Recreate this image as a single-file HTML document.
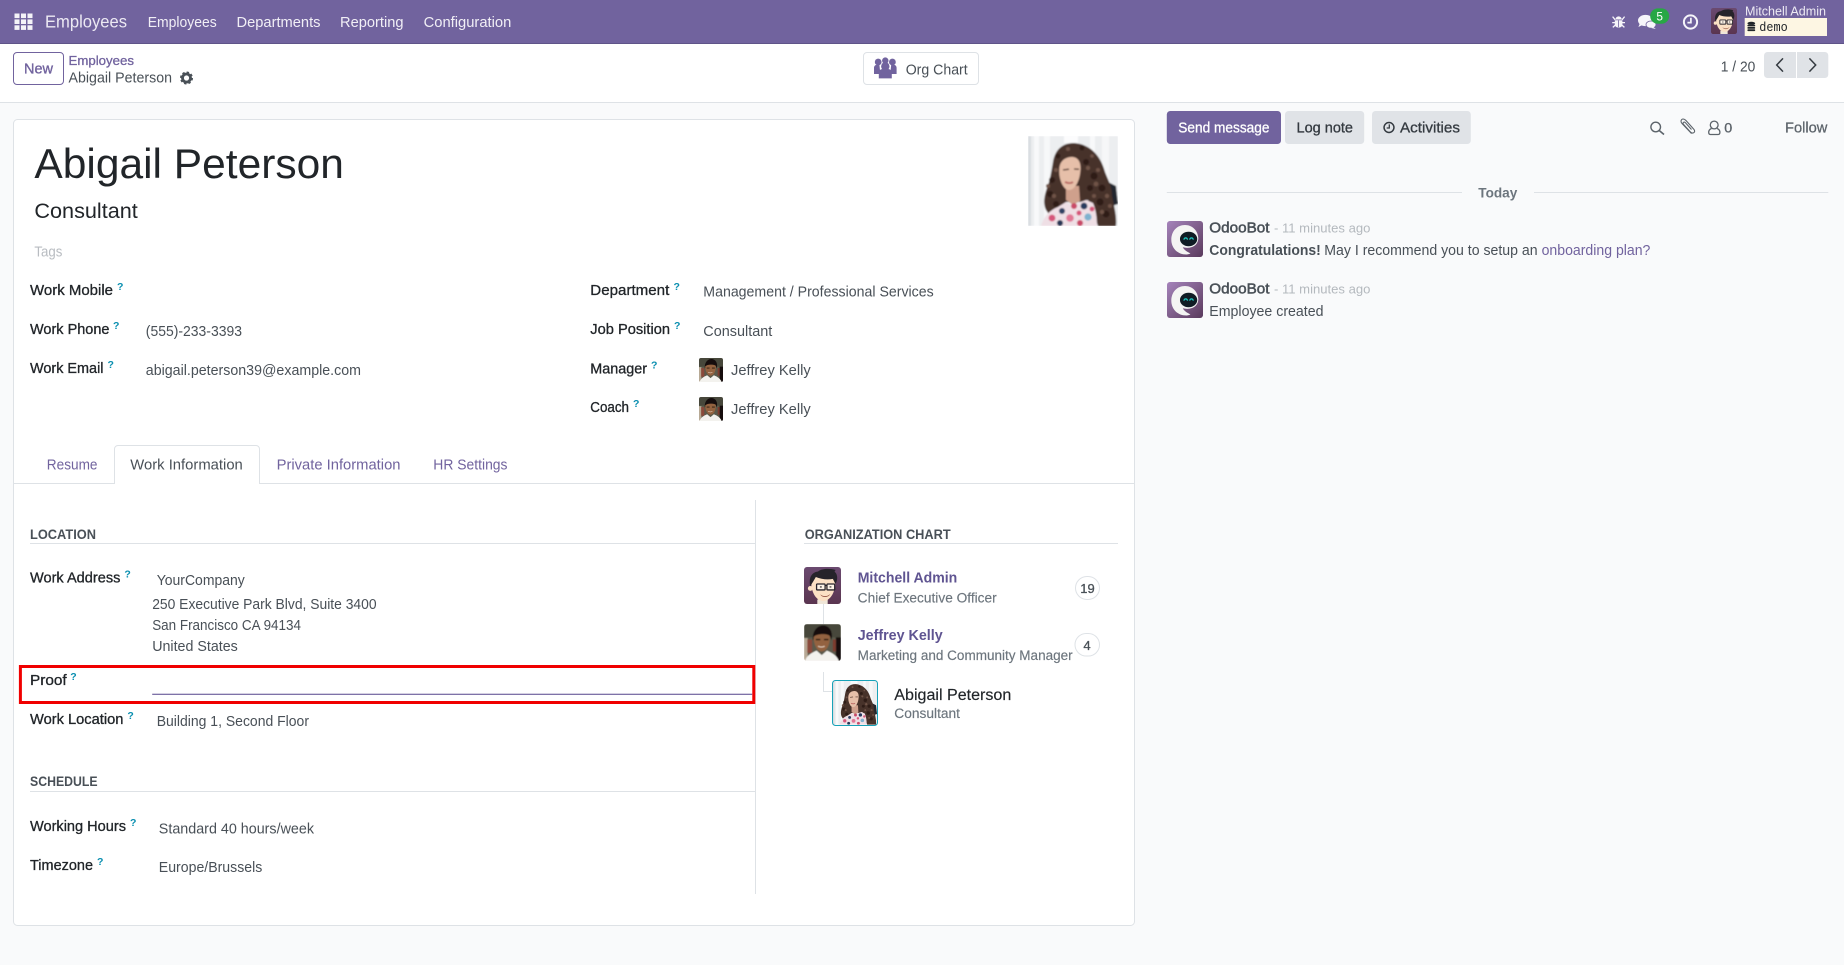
<!DOCTYPE html>
<html lang="en">
<head>
<meta charset="utf-8">
<title>Abigail Peterson - Employees</title>
<style>
html,body{margin:0;padding:0;width:1844px;height:965px;overflow:hidden;background:#f9fafb}
svg{display:block}
text{font-family:"Liberation Sans",sans-serif;white-space:pre}
.nav{font-size:15px;fill:#f1eff6}
.lb{font-size:14.5px;fill:#212529;stroke:#212529;stroke-width:.3}
.v{font-size:14.5px;fill:#495057}
.h{font-size:10.5px;fill:#0a8fb0;font-weight:bold}
.sec{font-size:13.5px;fill:#495057;font-weight:bold}
.tab{font-size:14.5px;fill:#71639e}
.ch{font-size:14.5px;fill:#495057}
.m{font-size:14.5px;fill:#495057;stroke:#495057;stroke-width:.5}
.t{font-size:13px;fill:#b4b9be}
.sub{font-size:13.5px;fill:#6c757d;stroke:#6c757d;stroke-width:.15}
.oc{font-size:14.5px;fill:#5f5491;font-weight:bold}
</style>
</head>
<body>
<svg xmlns="http://www.w3.org/2000/svg" width="1844" height="965" viewBox="0 0 1844 965">
<defs>
<filter id="b1" x="-5%" y="-5%" width="110%" height="110%"><feGaussianBlur stdDeviation="0.8"/></filter>
<filter id="b2" x="-5%" y="-5%" width="110%" height="110%"><feGaussianBlur stdDeviation="1.6"/></filter>
<clipPath id="c90"><rect width="90" height="90"/></clipPath>
<clipPath id="c100r"><rect width="100" height="100" rx="8"/></clipPath>
<linearGradient id="gm" x1="0" y1="0" x2="0" y2="1"><stop offset="0" stop-color="#6b4a70"/><stop offset="1" stop-color="#5a3550"/></linearGradient>
<linearGradient id="gb" x1="0" y1="0" x2="1" y2="1"><stop offset="0" stop-color="#a583bb"/><stop offset="1" stop-color="#5a3a5c"/></linearGradient>

<symbol id="abi" viewBox="0 0 90 90">
<g clip-path="url(#c90)"><g filter="url(#b1)">
<rect width="90" height="90" fill="#eceef0"/>
<rect x="0" width="3" height="90" fill="#d9dde1"/>
<rect x="6" width="5" height="90" fill="#f8f9fa"/>
<rect x="16" width="6" height="90" fill="#f7f8f9"/>
<rect x="36" width="14" height="7" fill="#fcfcfd"/>
<rect x="62" width="5" height="40" fill="#f8f9fa"/>
<rect x="74" width="7" height="90" fill="#f6f7f8"/>
<path d="M80 46l8 4 2 18-6 2z" fill="#23262f"/>
<path d="M46 7C34 7 27 14 25 26 23 38 22 44 19 52 16 60 15 68 18 74 22 80 25 84 30 78L38 66 52 66 60 64 70 90 88 90C89 80 86 70 84 60 84 50 80 44 77 36 73 20 62 8 46 7Z" fill="#46302a"/>
<g fill="#2f1e18">
<circle cx="24" cy="44" r="3"/><circle cx="22" cy="58" r="3.2"/><circle cx="28" cy="68" r="3"/><circle cx="58" cy="26" r="3"/><circle cx="66" cy="40" r="3.6"/><circle cx="62" cy="52" r="3"/><circle cx="74" cy="52" r="3.4"/><circle cx="72" cy="66" r="3.6"/><circle cx="78" cy="78" r="3.4"/><circle cx="30" cy="20" r="2.4"/><circle cx="54" cy="12" r="2.4"/>
</g>
<g fill="#6f5346">
<circle cx="20" cy="50" r="2"/><circle cx="26" cy="60" r="2.2"/><circle cx="28" cy="34" r="2"/><circle cx="60" cy="32" r="2.2"/><circle cx="70" cy="34" r="2"/><circle cx="68" cy="48" r="2.4"/><circle cx="79" cy="60" r="2.2"/><circle cx="66" cy="60" r="2"/><circle cx="74" cy="76" r="2.2"/><circle cx="40" cy="13" r="2"/><circle cx="64" cy="20" r="1.8"/><circle cx="82" cy="70" r="2"/>
</g>
<path d="M38 50l13 0 1 15-7 4-7-5z" fill="#cfa08c"/>
<path d="M31.500 31C32.500 25 37 21 44 21 49 21 53 25 52.500 33 52 45 47 54 41 54 35 54 30 42 31.500 31Z" fill="#e6bfa9"/>
<path d="M35 34l6-.8M46 33l5 .2" stroke="#4a2f26" stroke-width="1.300"/>
<path d="M37 46c3 1.400 6 1.400 8 0" stroke="#b8635f" stroke-width="1.800" fill="none"/>
<path d="M13 90C16 80 22 74 30 71L38 66 44 70 58 64 65 67C68 74 69 82 69 90Z" fill="#efdfe5"/>
<circle cx="24" cy="82" r="3.400" fill="#d6557a"/><circle cx="34" cy="75" r="3" fill="#2f3f63"/><circle cx="46" cy="70" r="3" fill="#c94a68"/>
<circle cx="56" cy="70" r="3.400" fill="#283a5e"/><circle cx="42" cy="82" r="3.800" fill="#e17795"/><circle cx="60" cy="81" r="3.600" fill="#7fb2cf"/>
<circle cx="32" cy="87" r="3" fill="#263555"/><circle cx="51" cy="77" r="2.500" fill="#d6557a"/><circle cx="52" cy="87" r="3" fill="#c94a68"/><circle cx="64" cy="73" r="2.400" fill="#d6557a"/>
</g></g>
</symbol>

<symbol id="jef" viewBox="0 0 100 100">
<g clip-path="url(#c100r)"><g filter="url(#b2)">
<rect width="100" height="100" fill="#5b5a4b"/>
<rect x="0" y="0" width="100" height="36" fill="#46473b"/>
<rect x="0" y="38" width="10" height="62" fill="#b7a995"/>
<rect x="9" y="42" width="13" height="36" fill="#8a4a3a"/>
<rect x="86" y="36" width="14" height="64" fill="#181110"/>
<rect x="78" y="42" width="8" height="32" fill="#7e3a2d"/>
<path d="M24 44C22 16 38 4 52 4 68 4 80 20 74 44L70 32 32 32Z" fill="#130f0d"/>
<path d="M26 36C28 26 68 24 70 34 70 56 62 74 47 74 35 74 26 54 26 36Z" fill="#93623f"/>
<path d="M32 42h12M54 42h12" stroke="#2a1a10" stroke-width="3.500"/>
<path d="M38 60c6 3 12 3 18 0" stroke="#ecd9c8" stroke-width="2.500" fill="none"/>
<path d="M3 100C6 86 20 78 34 72L48 84 62 72C76 78 90 86 94 100Z" fill="#f3f2ee"/>
</g></g>
</symbol>

<symbol id="mit" viewBox="0 0 100 100">
<g clip-path="url(#c100r)">
<rect width="100" height="100" fill="url(#gm)"/>
<path d="M36 88h28v12H36z" fill="#efe6d8"/>
<path d="M20 38C18 66 32 92 52 92 70 92 84 70 85 42L78 24H28Z" fill="#fbe0c4"/>
<circle cx="17" cy="58" r="6.500" fill="#fbe0c4"/>
<path d="M17 52C12 30 20 14 38 12 50 3 70 4 86 8 82 11 82 13 86 16 92 26 90 38 85 46L78 32C64 35 46 33 32 27 28 34 23 42 17 52Z" fill="#26232a"/>
<rect x="34" y="46" width="23" height="16" rx="2" fill="#fdf3e6" stroke="#26232a" stroke-width="3.500"/>
<rect x="62" y="46" width="21" height="16" rx="2" fill="#fdf3e6" stroke="#26232a" stroke-width="3.500"/>
<path d="M57 50h5" stroke="#26232a" stroke-width="3"/>
<path d="M43 54h5M69 54h5" stroke="#26232a" stroke-width="3"/>
<path d="M44 74c8 7 20 6 27-1-4 10-22 11-27 1z" fill="#8e4a3a"/>
</g>
</symbol>

<symbol id="bot" viewBox="0 0 100 100">
<g clip-path="url(#c100r)">
<rect width="100" height="100" fill="url(#gb)"/>
<path d="M50 11C28 11 12 28 12 52 12 74 28 93 54 93 58 93 62 92 65 90 52 84 46 78 44 73 62 78 86 72 87 48 86 26 70 11 50 11Z" fill="#f4f4f3"/>
<ellipse cx="60" cy="50" rx="24" ry="20" fill="#101c24"/>
<path d="M47 52c1-7 9-7 10 0M63 52c1-7 9-7 10 0" stroke="#1fc7c0" stroke-width="3.400" fill="none"/>
</g>
</symbol>

<symbol id="clock" viewBox="0 0 16 16">
<circle cx="8" cy="8" r="6.600" fill="none" stroke="currentColor" stroke-width="2"/>
<path d="M8.400 3.800V8.600H4.900" fill="none" stroke="currentColor" stroke-width="1.700"/>
</symbol>
</defs>

<!-- page bg -->
<rect width="1844" height="965" fill="#f9fafb"/>

<!-- navbar -->
<rect width="1844" height="44" fill="#71639e"/>
<rect y="43" width="1844" height="1" fill="#5f5488"/>
<g fill="#f4f3f8">
<rect x="14.500" y="13.500" width="5" height="4.600"/><rect x="21" y="13.500" width="5" height="4.600"/><rect x="27.500" y="13.500" width="5" height="4.600"/>
<rect x="14.500" y="19.400" width="5" height="4.600"/><rect x="21" y="19.400" width="5" height="4.600"/><rect x="27.500" y="19.400" width="5" height="4.600"/>
<rect x="14.500" y="25.300" width="5" height="4.600"/><rect x="21" y="25.300" width="5" height="4.600"/><rect x="27.500" y="25.300" width="5" height="4.600"/>
</g>
<text x="45" y="27.500" font-size="17.500" fill="#ece9f3" textLength="82" lengthAdjust="spacingAndGlyphs">Employees</text>
<text class="nav" x="147.700" y="27" textLength="69" lengthAdjust="spacingAndGlyphs">Employees</text>
<text class="nav" x="236.500" y="27" textLength="84" lengthAdjust="spacingAndGlyphs">Departments</text>
<text class="nav" x="340" y="27" textLength="63.500" lengthAdjust="spacingAndGlyphs">Reporting</text>
<text class="nav" x="423.600" y="27" textLength="87.700" lengthAdjust="spacingAndGlyphs">Configuration</text>

<!-- systray -->
<g fill="#f6f5fa" stroke="none">
<path d="M1615.500 19.500a3 3 0 0 1 6.200 0z"/>
<path d="M1614.800 20.300h7.600v4c0 2.300-1.600 3.300-3.800 3.300s-3.800-1-3.800-3.300z"/>
</g>
<path d="M1612.600 16.600l2.600 3.200M1624.600 16.600l-2.600 3.200M1612.200 22.600h3M1625 22.600h-3M1612.800 27.400l2.600-2.400M1624.400 27.400l-2.600-2.400" stroke="#f6f5fa" stroke-width="1.300" fill="none"/>
<path d="M1618.600 20.300v7" stroke="#71639e" stroke-width=".8"/>
<ellipse cx="1645.500" cy="20.500" rx="7.500" ry="5.600" fill="#f6f5fa"/>
<path d="M1640 23l-1.600 4 5-2.500z" fill="#f6f5fa"/>
<ellipse cx="1651" cy="24.600" rx="5" ry="3.600" fill="#f6f5fa" stroke="#71639e" stroke-width=".8"/>
<path d="M1653.400 27l2.400 2-4.600-1z" fill="#f6f5fa"/>
<rect x="1650.200" y="8.400" width="19" height="15.400" rx="7.700" fill="#28a745"/>
<text x="1656.400" y="20.600" font-size="11.500" fill="#fff" textLength="6.600" lengthAdjust="spacingAndGlyphs">5</text>
<use href="#clock" x="1682.500" y="14" width="16" height="16" style="color:#f6f5fa"/>
<use href="#mit" x="1711" y="8" width="26" height="26"/>
<text x="1745" y="15.700" font-size="13" fill="#ece9f3" textLength="81" lengthAdjust="spacingAndGlyphs">Mitchell Admin</text>
<rect x="1744.700" y="18" width="82.300" height="18" fill="#fdf6e3"/>
<g fill="#212529"><ellipse cx="1751.300" cy="23.300" rx="3.900" ry="1.500"/><rect x="1747.400" y="24.600" width="7.800" height="1.800" rx=".8"/><rect x="1747.400" y="27" width="7.800" height="1.800" rx=".8"/><rect x="1747.400" y="29.300" width="7.800" height="1.800" rx=".8"/></g>
<text x="1759.300" y="31" font-size="12.500" fill="#212529" style="font-family:'Liberation Mono',monospace" textLength="28.400" lengthAdjust="spacingAndGlyphs">demo</text>

<!-- control panel -->
<rect y="44" width="1844" height="58" fill="#fff"/>
<rect y="102" width="1844" height="1" fill="#dee2e6"/>
<rect x="13.500" y="52.500" width="50" height="32" rx="3.500" fill="#fff" stroke="#71639e"/>
<text x="24" y="73.600" font-size="14.500" fill="#71639e" stroke="#71639e" stroke-width=".35" textLength="29" lengthAdjust="spacingAndGlyphs">New</text>
<text x="68.500" y="65" font-size="13" fill="#71639e" stroke="#71639e" stroke-width=".3" textLength="65.500" lengthAdjust="spacingAndGlyphs">Employees</text>
<text x="68.500" y="82.700" font-size="14.500" fill="#495057" textLength="103.500" lengthAdjust="spacingAndGlyphs">Abigail Peterson</text>
<circle cx="186.500" cy="78" r="4" fill="none" stroke="#495057" stroke-width="2.800"/>
<circle cx="186.500" cy="78" r="5.700" fill="none" stroke="#495057" stroke-width="1.600" stroke-dasharray="2.400 2.070"/>

<rect x="863.500" y="52.500" width="115" height="32" rx="3.500" fill="#fff" stroke="#dee2e6"/>
<g fill="#71639e">
<circle cx="878.200" cy="62" r="3.400"/><circle cx="892.400" cy="62" r="3.400"/><circle cx="885.300" cy="60.600" r="3.200"/>
<path d="M874 74v-6c0-2 1.400-3.200 3-3.200h2.400l1 9.200zM896.600 74v-6c0-2-1.400-3.200-3-3.200h-2.400l-1 9.200z"/>
<circle cx="885.300" cy="66.400" r="4.200"/>
<path d="M878.800 78.400v-5.400c0-2.600 1.800-4 4-4h5c2.200 0 4 1.400 4 4v5.400z"/>
</g>
<text x="905.700" y="74.300" font-size="14.500" fill="#495057" textLength="62" lengthAdjust="spacingAndGlyphs">Org Chart</text>

<text x="1720.800" y="71.700" font-size="14.500" fill="#495057" textLength="34.500" lengthAdjust="spacingAndGlyphs">1 / 20</text>
<path d="M1767.500 52h28.500v26h-28.500a3.500 3.500 0 0 1-3.500-3.500v-19a3.500 3.500 0 0 1 3.500-3.500z" fill="#e0e3e7"/>
<path d="M1797 52h27.800a3.500 3.500 0 0 1 3.500 3.500v19a3.500 3.500 0 0 1-3.500 3.500h-27.800z" fill="#e0e3e7"/>
<path d="M1783 58.400l-6.300 6.600 6.300 6.600M1809.400 58.400l6.300 6.600-6.300 6.600" fill="none" stroke="#343a40" stroke-width="1.500"/>

<!-- sheet -->
<rect x="13.500" y="119.500" width="1121" height="806" rx="4" fill="#fff" stroke="#dee2e6"/>

<text x="34.400" y="178" font-size="42" fill="#212529" textLength="309.500" lengthAdjust="spacingAndGlyphs">Abigail Peterson</text>
<text x="34.400" y="218" font-size="21" fill="#212529" textLength="103.400" lengthAdjust="spacingAndGlyphs">Consultant</text>
<text x="34.400" y="256.700" font-size="14.500" fill="#b8bcc1" textLength="28" lengthAdjust="spacingAndGlyphs">Tags</text>
<use href="#abi" x="1028" y="136" width="90" height="90"/>

<!-- left fields -->
<text class="lb" x="30" y="295" textLength="83" lengthAdjust="spacingAndGlyphs">Work Mobile</text><text class="h" x="117" y="290">?</text>
<text class="lb" x="30" y="334" textLength="79.500" lengthAdjust="spacingAndGlyphs">Work Phone</text><text class="h" x="113" y="329">?</text>
<text class="v" x="145.800" y="336" textLength="96.200" lengthAdjust="spacingAndGlyphs">(555)-233-3393</text>
<text class="lb" x="30" y="373" textLength="73.500" lengthAdjust="spacingAndGlyphs">Work Email</text><text class="h" x="107.500" y="368">?</text>
<text class="v" x="145.800" y="375" textLength="215.200" lengthAdjust="spacingAndGlyphs">abigail.peterson39@example.com</text>

<!-- right fields -->
<text class="lb" x="590.300" y="295" textLength="79" lengthAdjust="spacingAndGlyphs">Department</text><text class="h" x="673.500" y="290">?</text>
<text class="v" x="703.300" y="296.700" textLength="230.400" lengthAdjust="spacingAndGlyphs">Management / Professional Services</text>
<text class="lb" x="590.300" y="334" textLength="79.700" lengthAdjust="spacingAndGlyphs">Job Position</text><text class="h" x="674" y="329">?</text>
<text class="v" x="703.300" y="336" textLength="69" lengthAdjust="spacingAndGlyphs">Consultant</text>
<text class="lb" x="590.300" y="373.300" textLength="56.700" lengthAdjust="spacingAndGlyphs">Manager</text><text class="h" x="651" y="368.300">?</text>
<use href="#jef" x="699" y="358" width="24" height="24"/>
<text class="v" x="731" y="375" textLength="79.700" lengthAdjust="spacingAndGlyphs">Jeffrey Kelly</text>
<text class="lb" x="590.300" y="412" textLength="38.700" lengthAdjust="spacingAndGlyphs">Coach</text><text class="h" x="633" y="407">?</text>
<use href="#jef" x="699" y="397" width="24" height="24"/>
<text class="v" x="731" y="414" textLength="79.700" lengthAdjust="spacingAndGlyphs">Jeffrey Kelly</text>

<!-- tabs -->
<rect x="14" y="483" width="1120" height="1" fill="#dee2e6"/>
<path d="M114.500 484V449a3.500 3.500 0 0 1 3.500-3.500h138a3.500 3.500 0 0 1 3.500 3.500v35" fill="#fff" stroke="#dee2e6"/>
<rect x="115" y="482" width="144" height="3" fill="#fff"/>
<text class="tab" x="46.800" y="469.300" textLength="50.700" lengthAdjust="spacingAndGlyphs">Resume</text>
<text class="tab" x="130.300" y="469.300" style="fill:#495057" textLength="112.500" lengthAdjust="spacingAndGlyphs">Work Information</text>
<text class="tab" x="276.600" y="469.300" textLength="123.900" lengthAdjust="spacingAndGlyphs">Private Information</text>
<text class="tab" x="433.300" y="469.300" textLength="74.200" lengthAdjust="spacingAndGlyphs">HR Settings</text>

<rect x="755" y="500" width="1" height="394" fill="#dee2e6"/>

<!-- location -->
<text class="sec" x="30" y="539" textLength="66" lengthAdjust="spacingAndGlyphs">LOCATION</text>
<rect x="30" y="543" width="725" height="1" fill="#dee2e6"/>
<text class="lb" x="30" y="582.700" textLength="90.400" lengthAdjust="spacingAndGlyphs">Work Address</text><text class="h" x="124.400" y="577.500">?</text>
<text class="v" x="156.700" y="585" textLength="88.100" lengthAdjust="spacingAndGlyphs">YourCompany</text>
<text class="v" x="152.200" y="609" textLength="224.400" lengthAdjust="spacingAndGlyphs">250 Executive Park Blvd, Suite 3400</text>
<text class="v" x="152.200" y="630" textLength="148.800" lengthAdjust="spacingAndGlyphs">San Francisco CA 94134</text>
<text class="v" x="152.200" y="651" textLength="85.600" lengthAdjust="spacingAndGlyphs">United States</text>

<text class="lb" x="30" y="685" textLength="36.700" lengthAdjust="spacingAndGlyphs">Proof</text><text class="h" x="70.300" y="680">?</text>
<rect x="152.200" y="693.700" width="600" height="1.200" fill="#71639e"/>
<rect x="20.400" y="666.500" width="733.400" height="36" fill="none" stroke="#f00000" stroke-width="3"/>

<text class="lb" x="30" y="724" textLength="93.400" lengthAdjust="spacingAndGlyphs">Work Location</text><text class="h" x="127.400" y="719">?</text>
<text class="v" x="156.700" y="726" textLength="152.300" lengthAdjust="spacingAndGlyphs">Building 1, Second Floor</text>

<!-- schedule -->
<text class="sec" x="30" y="786" textLength="67.600" lengthAdjust="spacingAndGlyphs">SCHEDULE</text>
<rect x="30" y="791" width="725" height="1" fill="#dee2e6"/>
<text class="lb" x="30" y="831" textLength="96" lengthAdjust="spacingAndGlyphs">Working Hours</text><text class="h" x="130" y="826">?</text>
<text class="v" x="158.800" y="833.500" textLength="155.200" lengthAdjust="spacingAndGlyphs">Standard 40 hours/week</text>
<text class="lb" x="30" y="870" textLength="63" lengthAdjust="spacingAndGlyphs">Timezone</text><text class="h" x="97" y="865">?</text>
<text class="v" x="158.800" y="872" textLength="103.500" lengthAdjust="spacingAndGlyphs">Europe/Brussels</text>

<!-- org chart -->
<text class="sec" x="804.700" y="539" textLength="146" lengthAdjust="spacingAndGlyphs">ORGANIZATION CHART</text>
<rect x="804" y="543" width="314" height="1" fill="#dee2e6"/>
<use href="#mit" x="804" y="567" width="37" height="37"/>
<rect x="823" y="604" width="1" height="20" fill="#dee2e6"/>
<text class="oc" x="857.700" y="582.700" textLength="99.600" lengthAdjust="spacingAndGlyphs">Mitchell Admin</text>
<text class="sub" x="857.700" y="602.700" textLength="139" lengthAdjust="spacingAndGlyphs">Chief Executive Officer</text>
<rect x="1075.500" y="576.500" width="24" height="23" rx="11.500" fill="#fff" stroke="#dee2e6"/>
<text x="1080.300" y="593" font-size="13" fill="#495057" stroke="#495057" stroke-width=".3" textLength="14.400" lengthAdjust="spacingAndGlyphs">19</text>
<use href="#jef" x="804" y="624" width="37" height="37"/>
<text class="oc" x="857.700" y="640" textLength="85" lengthAdjust="spacingAndGlyphs">Jeffrey Kelly</text>
<text class="sub" x="857.700" y="660" textLength="215" lengthAdjust="spacingAndGlyphs">Marketing and Community Manager</text>
<rect x="1075" y="633.500" width="24.500" height="22.500" rx="11.200" fill="#fff" stroke="#dee2e6"/>
<text x="1083.400" y="650" font-size="13" fill="#495057" stroke="#495057" stroke-width=".3" textLength="7.300" lengthAdjust="spacingAndGlyphs">4</text>
<path d="M823.500 672V691.500H832.500" fill="none" stroke="#dee2e6"/>
<use href="#abi" x="833" y="680.500" width="44" height="44.500"/>
<rect x="832.500" y="680.500" width="45" height="45" rx="3" fill="none" stroke="#17a2b8"/>
<text x="894.300" y="700" font-size="15.500" fill="#212529" stroke="#212529" stroke-width=".15" textLength="117" lengthAdjust="spacingAndGlyphs">Abigail Peterson</text>
<text class="sub" x="894.300" y="718" textLength="65.700" lengthAdjust="spacingAndGlyphs">Consultant</text>

<!-- chatter -->
<rect x="1166.800" y="111" width="114.200" height="33" rx="3.500" fill="#71639e"/>
<text x="1178.300" y="132.700" font-size="14.500" fill="#fff" stroke="#fff" stroke-width=".3" textLength="91.200" lengthAdjust="spacingAndGlyphs">Send message</text>
<rect x="1285" y="111" width="79.200" height="33" rx="3.500" fill="#e0e3e7"/>
<text x="1296.500" y="132.700" font-size="14.500" fill="#343a40" stroke="#343a40" stroke-width=".3" textLength="56.500" lengthAdjust="spacingAndGlyphs">Log note</text>
<rect x="1372" y="111" width="98.800" height="33" rx="3.500" fill="#e0e3e7"/>
<use href="#clock" x="1383" y="121.500" width="12" height="12" style="color:#343a40"/>
<text x="1400" y="132.700" font-size="14.500" fill="#343a40" stroke="#343a40" stroke-width=".3" textLength="60" lengthAdjust="spacingAndGlyphs">Activities</text>

<circle cx="1655.700" cy="127" r="4.800" fill="none" stroke="#5c636a" stroke-width="1.400"/>
<path d="M1659.200 130.500l4.800 4" stroke="#5c636a" stroke-width="1.600"/>
<path d="M1691.500 133.500l-9.500-10c-2-2.200-.5-4.500 1-4.500 1.300 0 2.300.8 3.300 1.900l7.500 8.300c1.300 1.500 1 3-.2 3.600-1.100.6-2.300.2-3.300-.9l-6.800-7.500c-.7-.8-.6-1.700 0-2.100.7-.5 1.400-.2 2 .5l6 6.700" fill="none" stroke="#5c636a" stroke-width="1.100"/>
<circle cx="1714.200" cy="125" r="3.900" fill="none" stroke="#5c636a" stroke-width="1.300"/>
<path d="M1711.500 128.500c-2 .8-2.800 2.200-2.800 3.800 0 1.300.5 2.200 1.600 2.200h7.900c1.100 0 1.700-.9 1.700-2.200 0-1.600-.8-3-2.800-3.800" fill="none" stroke="#5c636a" stroke-width="1.300"/>
<text x="1724.300" y="132.700" font-size="14" fill="#5c636a" stroke="#5c636a" stroke-width=".3" textLength="8" lengthAdjust="spacingAndGlyphs">0</text>
<text x="1785" y="132.700" font-size="14.500" fill="#5c636a" stroke="#5c636a" stroke-width=".25" textLength="42.400" lengthAdjust="spacingAndGlyphs">Follow</text>

<rect x="1166.800" y="192" width="295.200" height="1" fill="#dee2e6"/>
<rect x="1534" y="192" width="294.300" height="1" fill="#dee2e6"/>
<text x="1478.300" y="197.300" font-size="14" fill="#6c757d" font-weight="bold" textLength="39" lengthAdjust="spacingAndGlyphs">Today</text>

<use href="#bot" x="1167" y="221" width="36" height="36"/>
<text class="m" x="1209.300" y="232.700" textLength="60.200" lengthAdjust="spacingAndGlyphs">OdooBot</text>
<text class="t" x="1274" y="232.700" textLength="96.400" lengthAdjust="spacingAndGlyphs">- 11 minutes ago</text>
<text x="1209.300" y="255" font-size="14.500" fill="#495057" font-weight="bold" textLength="111.500" lengthAdjust="spacingAndGlyphs">Congratulations!</text>
<text class="ch" x="1324.300" y="255" textLength="213.300" lengthAdjust="spacingAndGlyphs">May I recommend you to setup an</text>
<text class="ch" x="1541.600" y="255" style="fill:#71639e" textLength="108.800" lengthAdjust="spacingAndGlyphs">onboarding plan?</text>

<use href="#bot" x="1167" y="282" width="36" height="36"/>
<text class="m" x="1209.300" y="293.700" textLength="60.200" lengthAdjust="spacingAndGlyphs">OdooBot</text>
<text class="t" x="1274" y="293.700" textLength="96.400" lengthAdjust="spacingAndGlyphs">- 11 minutes ago</text>
<text class="ch" x="1209.300" y="316" textLength="114.200" lengthAdjust="spacingAndGlyphs">Employee created</text>
</svg>
</body>
</html>
